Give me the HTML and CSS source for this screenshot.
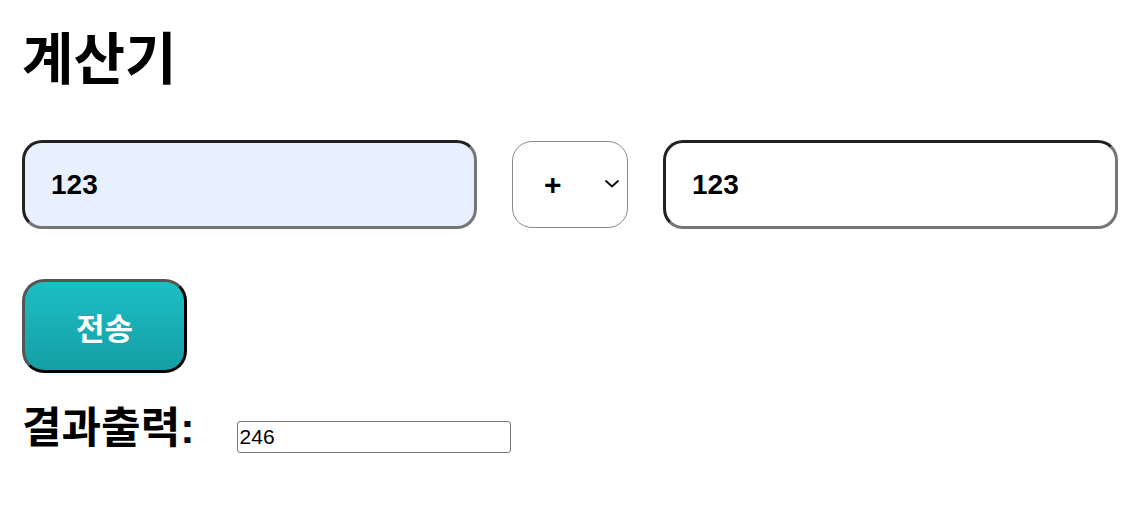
FILE: index.html
```html
<!DOCTYPE html>
<html lang="ko">
<head>
<meta charset="utf-8">
<title>계산기</title>
<link rel="stylesheet" href="styles.css">
</head>
<body>
<h1 class="title">계산기</h1>
<form class="calc">
  <div class="row">
    <input class="num num-filled" type="text" value="123">
    <span class="op-wrap">
      <select class="op">
        <option>+</option>
        <option>-</option>
        <option>*</option>
        <option>/</option>
      </select>
      <svg class="op-arrow" width="16" height="9" viewBox="0 0 16 9" aria-hidden="true">
        <path d="M1.5 1.5 L8 7.5 L14.5 1.5" fill="none" stroke="#111" stroke-width="2"/>
      </svg>
    </span>
    <input class="num" type="text" value="123">
  </div>
  <button class="submit" type="button">전송</button>
  <div class="result">
    <span class="result-label">결과출력:</span>
    <input class="result-out" type="text" value="246">
  </div>
</form>
</body>
</html>
```
FILE: styles.css
```css
html, body {
  margin: 0;
  background: #fff;
}
body {
  padding: 24px 22px 0 22px;
  font-family: "Liberation Sans", Arial, "Noto Sans CJK KR", sans-serif;
  color: #000;
}
.title {
  margin: 0;
  font-family: "Noto Sans CJK KR", sans-serif;
  font-size: 56px;
  line-height: 62px;
  font-weight: 700;
}
.calc {
  margin-top: 54px;
  display: flex;
  flex-direction: column;
  align-items: flex-start;
}
.row {
  display: flex;
  align-items: center;
  gap: 35px;
}
.num {
  box-sizing: border-box;
  width: 455px;
  height: 89px;
  border: 3px inset #767676;
  border-radius: 20px;
  padding: 0 0 0 26px;
  font-family: "Liberation Sans", Arial, sans-serif;
  font-size: 28px;
  font-weight: 700;
  color: #000;
  background: #fff;
  outline: none;
}
.num-filled {
  background: #e8f0fe;
}
.op-wrap {
  position: relative;
  display: block;
  width: 116px;
  height: 87px;
}
.op {
  -webkit-appearance: none;
  appearance: none;
  box-sizing: border-box;
  width: 116px;
  height: 87px;
  border: 1px solid #8a8a8a;
  border-radius: 20px;
  padding: 0 0 0 31px;
  font-family: "Liberation Sans", Arial, sans-serif;
  font-size: 30px;
  font-weight: 700;
  color: #000;
  background: #fff;
  margin: 0;
}
.op-arrow {
  position: absolute;
  left: 92px;
  top: 38px;
  pointer-events: none;
}
.submit {
  box-sizing: border-box;
  margin-top: 50px;
  width: 165px;
  height: 94px;
  border: 3px solid;
  border-color: #555 #000 #000 #555;
  border-radius: 22px;
  background: linear-gradient(to bottom, #1cbfc4, #159ea5);
  color: #fff;
  font-family: "Noto Sans CJK KR", sans-serif;
  font-size: 31px;
  font-weight: 700;
  padding: 0;
}
.result {
  margin-top: 30px;
  display: flex;
  align-items: flex-start;
  gap: 42px;
}
.result-label {
  font-family: "Liberation Sans", Arial, "Noto Sans CJK KR", sans-serif;
  font-size: 43px;
  line-height: 50px;
  font-weight: 700;
  margin-left: 0;
}
.result-out {
  box-sizing: border-box;
  margin-top: 18px;
  width: 274px;
  height: 32px;
  border: 1px solid #767676;
  border-radius: 3px;
  padding: 1px 2px;
  font-family: "Liberation Sans", Arial, sans-serif;
  font-size: 21px;
  color: #000;
  background: #fff;
}
```
